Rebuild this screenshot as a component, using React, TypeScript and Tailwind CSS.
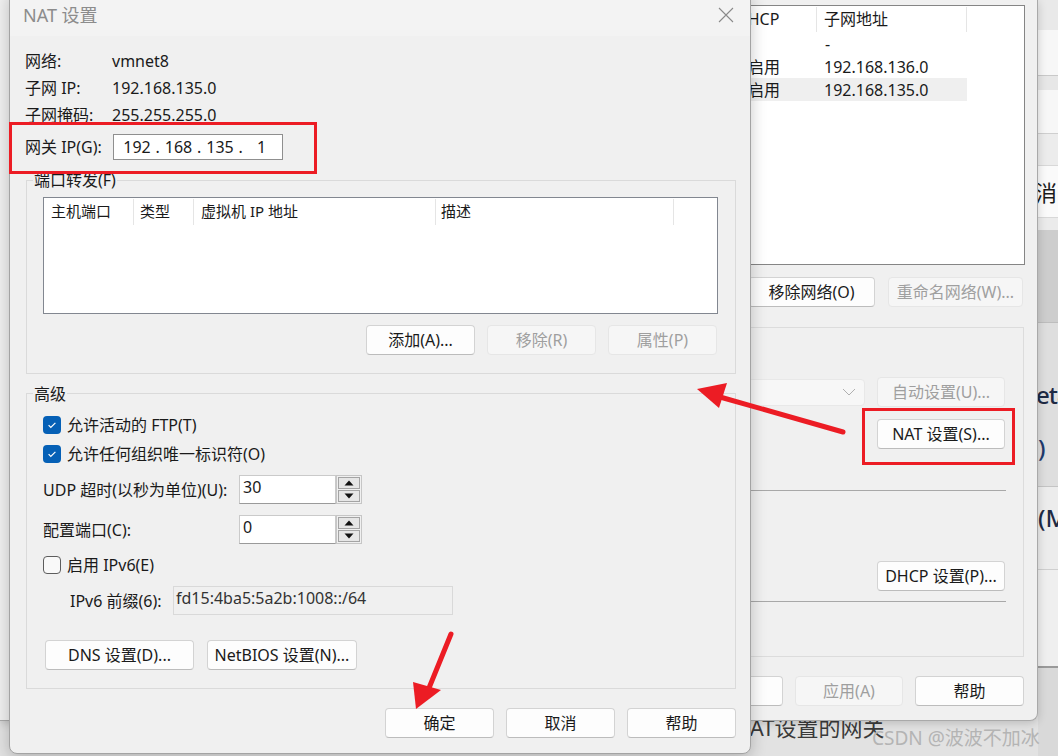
import React from "react";

type BtnProps = { children: React.ReactNode; w: string; disabled?: boolean };

function Btn({ children, w, disabled }: BtnProps) {
  return (
    <div
      className={`${w} h-[30px] shrink-0 flex items-center justify-center rounded-[4px] border text-[16px] leading-none ${
        disabled
          ? "bg-[#f6f6f6] border-[#e6e6e6] text-[#9f9f9f]"
          : "bg-[#fdfdfd] border-[#d3d3d3] border-b-[#bcbcbc] text-[#1a1a1a]"
      }`}
    >
      {children}
    </div>
  );
}

function Check({ checked }: { checked: boolean }) {
  return checked ? (
    <div className="w-[18px] h-[18px] rounded-[4px] bg-[#0560b6] flex items-center justify-center shrink-0">
      <svg width="18" height="18" viewBox="0 0 18 18">
        <path d="M5.6 9.2 L7.8 11.4 L12.4 6.8" fill="none" stroke="white" strokeWidth="1.2" />
      </svg>
    </div>
  ) : (
    <div className="w-[18px] h-[18px] rounded-[4px] border border-[#5d5d5d] bg-[#f9f9f9] shrink-0" />
  );
}

function Spinner() {
  return (
    <div className="w-[26px] h-[29px] border border-[#c6c6c6] bg-[#f0f0f0] flex flex-col p-[1px] gap-[1px] shrink-0">
      <div className="flex-1 border border-[#a4a4a4] bg-[#e6e6e6] flex items-center justify-center">
        <svg width="10" height="6" viewBox="0 0 10 6">
          <path d="M5 0.5 L9.5 5.5 L0.5 5.5 Z" fill="#111" />
        </svg>
      </div>
      <div className="flex-1 border border-[#a4a4a4] bg-[#e6e6e6] flex items-center justify-center">
        <svg width="10" height="6" viewBox="0 0 10 6">
          <path d="M0.5 0.5 L9.5 0.5 L5 5.5 Z" fill="#111" />
        </svg>
      </div>
    </div>
  );
}

function MiddleWindow() {
  return (
    <div className="absolute left-0 top-0 w-[1038px] h-[721px] bg-[#f0f0f0] border-r border-b border-[#a9a9a9] rounded-br-[8px] shadow-[0_2px_10px_rgba(0,0,0,0.18)] flex flex-col items-end text-[16px] text-[#1a1a1a]">
      {/* list */}
      <div className="mt-[5px] mr-[12px] w-[430px] h-[260px] bg-white border border-[#858585] flex flex-col">
        <div className="h-[26px] flex items-center shrink-0">
          <div className="w-[138px]" />
          <div className="w-[83px] h-[25px] pl-[2px] flex items-center border-r border-[#e5e5e5]">DHCP</div>
          <div className="w-[150px] h-[25px] pl-[7px] flex items-center border-r border-[#e5e5e5]">子网地址</div>
        </div>
        <div className="h-[23px] flex items-center">
          <div className="w-[138px]" />
          <div className="w-[83px]" />
          <div className="w-[150px] pl-[8px]">-</div>
        </div>
        <div className="h-[23px] flex items-center">
          <div className="w-[138px]" />
          <div className="w-[83px] pl-[14px]">启用</div>
          <div className="w-[150px] pl-[7px]">192.168.136.0</div>
        </div>
        <div className="h-[23px] flex items-center">
          <div className="w-[371px] h-[23px] flex items-center bg-[#efefef]">
            <div className="w-[138px]" />
            <div className="w-[83px] pl-[14px]">启用</div>
            <div className="w-[150px] pl-[7px]">192.168.135.0</div>
          </div>
        </div>
      </div>
      {/* list buttons */}
      <div className="mt-[12px] mr-[14px] flex gap-[13px]">
        <Btn w="w-[127px]">移除网络(O)</Btn>
        <Btn w="w-[135px]" disabled>
          重命名网络(W)...
        </Btn>
      </div>
      {/* group */}
      <div className="mt-[20px] mr-[13px] w-[430px] h-[330px] border border-[#dcdcdc] flex flex-col items-end pr-[18px]">
        <div className="mt-[49px] flex items-center gap-[12px]">
          <div className="w-[150px] h-[27px] bg-[#f7f7f7] border border-[#e8e8e8] rounded-[4px] flex items-center justify-end pr-[8px]">
            <svg width="14" height="8" viewBox="0 0 14 8">
              <path d="M1 1 L7 7 L13 1" fill="none" stroke="#b0b0b0" strokeWidth="1" />
            </svg>
          </div>
          <Btn w="w-[128px]" disabled>
            自动设置(U)...
          </Btn>
        </div>
        <div className="mt-[12px]">
          <Btn w="w-[128px]">NAT 设置(S)...</Btn>
        </div>
        <div className="mt-[41px] w-[300px] h-[1px] bg-[#a8a8a8] mr-[-1px]" />
        <div className="mt-[70px]">
          <Btn w="w-[128px]">DHCP 设置(P)...</Btn>
        </div>
        <div className="mt-[10px] w-[300px] h-[1px] bg-[#a8a8a8] mr-[-1px]" />
      </div>
      {/* bottom buttons */}
      <div className="mt-[19px] mr-[13px] flex gap-[12px]">
        <Btn w="w-[108px]">确定</Btn>
        <Btn w="w-[108px]" disabled>
          应用(A)
        </Btn>
        <Btn w="w-[109px]">帮助</Btn>
      </div>
    </div>
  );
}

function FarStrip() {
  return (
    <div className="absolute left-[1038px] top-0 w-[20px] h-[756px] flex flex-col overflow-hidden bg-[#d9d9d9]">
      <div className="h-[30px] shrink-0 bg-[#e9e9e9]" />
      <div className="h-[45px] shrink-0 bg-[#f7f7f7]" />
      <div className="h-[1px] shrink-0 bg-[#c9c9c9]" />
      <div className="h-[14px] shrink-0 bg-[#e7e7e7]" />
      <div className="h-[43px] shrink-0 bg-[#f7f7f7]" />
      <div className="h-[1px] shrink-0 bg-[#cfcfcf]" />
      <div className="h-[31px] shrink-0 bg-[#ececec]" />
      <div className="h-[53px] shrink-0 bg-[#fafafa] border-y border-[#d8d8d8] flex items-center">
        <span className="ml-[-3px] text-[22px] leading-none text-[#1a1a1a] whitespace-nowrap">消</span>
      </div>
      <div className="h-[12px] shrink-0 bg-[#ebebeb]" />
      <div className="h-[92px] shrink-0 bg-[#cdcdcd]" />
      <div className="h-[1px] shrink-0 bg-[#bdbdbd]" />
      <div className="h-[163px] shrink-0 bg-[#dedede] flex flex-col">
        <span className="mt-[58px] ml-[-2px] text-[24px] leading-[28px] font-medium text-[#1e2a44] whitespace-nowrap tracking-[-1px]">et8</span>
        <span className="mt-[25px] text-[24px] leading-[28px] font-medium text-[#1f3a6e] whitespace-nowrap">)</span>
      </div>
      <div className="h-[1px] shrink-0 bg-[#c4c4c4]" />
      <div className="h-[82px] shrink-0 bg-[#ececec] flex flex-col">
        <span className="mt-[17px] text-[24px] leading-[28px] font-medium text-[#1e2a44] whitespace-nowrap">(M</span>
      </div>
      <div className="h-[1px] shrink-0 bg-[#cfcfcf]" />
      <div className="h-[96px] shrink-0 bg-[#efefef]" />
      <div className="h-[2px] shrink-0 bg-[#9a9a9a]" />
    </div>
  );
}

function Dialog() {
  const octets = ["192", "168", "135", "1"];
  return (
    <div className="absolute left-[9px] top-[-8px] w-[742px] h-[762px] bg-[#f0f0f0] border border-[#a3a3a3] rounded-b-[8px] shadow-[0_4px_16px_rgba(0,0,0,0.22)] flex flex-col text-[16px] text-[#1a1a1a]">
      {/* title bar */}
      <div className="h-[43px] shrink-0 bg-[#f3f3f3] flex items-center justify-between pl-[13px] pr-[16px]">
        <span className="text-[18px] text-[#8c8c8c] leading-none">NAT 设置</span>
        <svg width="16" height="16" viewBox="0 0 16 16">
          <path d="M1 1 L15 15 M15 1 L1 15" stroke="#8a8a8a" strokeWidth="1.1" fill="none" />
        </svg>
      </div>
      {/* info rows */}
      <div className="pl-[15px] pt-[11px]">
        {[
          ["网络:", "vmnet8"],
          ["子网 IP:", "192.168.135.0"],
          ["子网掩码:", "255.255.255.0"],
        ].map(([a, b]) => (
          <div key={a} className="h-[27px] flex items-center">
            <span className="w-[87px]">{a}</span>
            <span>{b}</span>
          </div>
        ))}
        <div className="mt-[6px] h-[26px] flex items-center">
          <span className="w-[88px]">网关 IP(G):</span>
          <div className="w-[170px] h-[26px] bg-white border border-[#8f8f8f] pl-[9px] flex items-center">
            {octets.map((o, i) => (
              <React.Fragment key={i}>
                <span className="w-[28px] text-center">{o}</span>
                {i < 3 && <span className="w-[13.5px] text-center">.</span>}
              </React.Fragment>
            ))}
          </div>
        </div>
      </div>
      {/* port forwarding group */}
      <div className="relative mt-[20px] ml-[16px] mr-[14px] border border-[#dadada] pt-[16px] pl-[16px] pr-[17px] pb-[18px]">
        <span className="absolute left-[6px] top-[-11px] leading-[20px] px-[1px] bg-[#f0f0f0]">端口转发(F)</span>
        <div className="h-[117px] bg-white border border-[#828790] text-[15px]">
          <div className="h-[27px] flex items-center">
            <div className="w-[90px] h-[26px] pl-[7px] flex items-center border-r border-[#e5e5e5]">主机端口</div>
            <div className="w-[60px] h-[26px] pl-[6px] flex items-center border-r border-[#e5e5e5]">类型</div>
            <div className="w-[242px] h-[26px] pl-[7px] flex items-center border-r border-[#e5e5e5]">虚拟机 IP 地址</div>
            <div className="w-[238px] h-[26px] pl-[5px] flex items-center border-r border-[#e5e5e5]">描述</div>
          </div>
        </div>
        <div className="mt-[11px] flex justify-end gap-[12px] pr-[1px]">
          <Btn w="w-[109px]">添加(A)...</Btn>
          <Btn w="w-[109px]" disabled>
            移除(R)
          </Btn>
          <Btn w="w-[109px]" disabled>
            属性(P)
          </Btn>
        </div>
      </div>
      {/* advanced group */}
      <div className="relative mt-[19px] ml-[16px] mr-[14px] border border-[#dadada] pt-[16px] pl-[16px] pb-[18px]">
        <span className="absolute left-[6px] top-[-10px] leading-[20px] px-[1px] bg-[#f0f0f0]">高级</span>
        <div className="h-[29px] flex items-center gap-[6px]">
          <Check checked />
          <span>允许活动的 FTP(T)</span>
        </div>
        <div className="h-[29px] flex items-center gap-[6px]">
          <Check checked />
          <span>允许任何组织唯一标识符(O)</span>
        </div>
        <div className="mt-[7px] h-[29px] flex items-center">
          <span className="w-[196px]">UDP 超时(以秒为单位)(U):</span>
          <div className="w-[97px] h-[29px] bg-white border border-[#cacaca] border-b-[#9a9a9a] pl-[3px] pt-[1px] leading-[20px]">30</div>
          <Spinner />
        </div>
        <div className="mt-[11px] h-[29px] flex items-center">
          <span className="w-[196px]">配置端口(C):</span>
          <div className="w-[97px] h-[29px] bg-white border border-[#cacaca] border-b-[#9a9a9a] pl-[3px] pt-[1px] leading-[20px]">0</div>
          <Spinner />
        </div>
        <div className="mt-[6px] h-[29px] flex items-center gap-[6px]">
          <Check checked={false} />
          <span>启用 IPv6(E)</span>
        </div>
        <div className="mt-[7px] h-[29px] flex items-center pl-[27px]">
          <span className="w-[103px]">IPv6 前缀(6):</span>
          <div className="w-[280px] h-[29px] bg-[#f0f0f0] border border-[#d9d9d9] pl-[2px] pt-[1px] leading-[20px] text-[#333]">
            fd15:4ba5:5a2b:1008::/64
          </div>
        </div>
        <div className="mt-[25px] flex gap-[13px] pl-[2px]">
          <Btn w="w-[149px]">DNS 设置(D)...</Btn>
          <Btn w="w-[150px]">NetBIOS 设置(N)...</Btn>
        </div>
      </div>
      {/* dialog buttons */}
      <div className="mt-[19px] pr-[14px] flex justify-end gap-[12px]">
        <Btn w="w-[109px]">确定</Btn>
        <Btn w="w-[109px]">取消</Btn>
        <Btn w="w-[109px]">帮助</Btn>
      </div>
    </div>
  );
}

function Annotations() {
  return (
    <svg className="absolute left-0 top-0 pointer-events-none" width="1058" height="756" viewBox="0 0 1058 756">
      <rect x="10.5" y="123.5" width="305" height="49" fill="none" stroke="#ec1c24" strokeWidth="3" />
      <rect x="863.5" y="409.5" width="150" height="54" fill="none" stroke="#ec1c24" strokeWidth="3" />
      <line x1="843" y1="432" x2="720" y2="397" stroke="#ec1c24" strokeWidth="5" strokeLinecap="round" />
      <polygon points="697,389 727,383 719,408" fill="#ec1c24" />
      <line x1="451" y1="634" x2="429" y2="688" stroke="#ec1c24" strokeWidth="5" strokeLinecap="round" />
      <polygon points="416,709 413,682 441,690" fill="#ec1c24" />
    </svg>
  );
}

export default function App() {
  return (
    <div className="relative w-[1058px] h-[756px] overflow-hidden bg-[#e2e2e2] font-['Noto_Sans','Noto_Sans_CJK_SC',sans-serif]">
      <FarStrip />
      <div className="absolute left-0 top-[709px] w-[1058px] h-[44px] pl-[733px] text-[22px] leading-[36px] text-[#3a3a3a] whitespace-nowrap">
        NAT设置的网关
      </div>
      <MiddleWindow />
      <Dialog />
      <div className="absolute left-[872px] top-[726px] text-[19px] leading-[24px] text-[#b4b4b4] whitespace-nowrap">
        CSDN @波波不加冰
      </div>
      <Annotations />
    </div>
  );
}
